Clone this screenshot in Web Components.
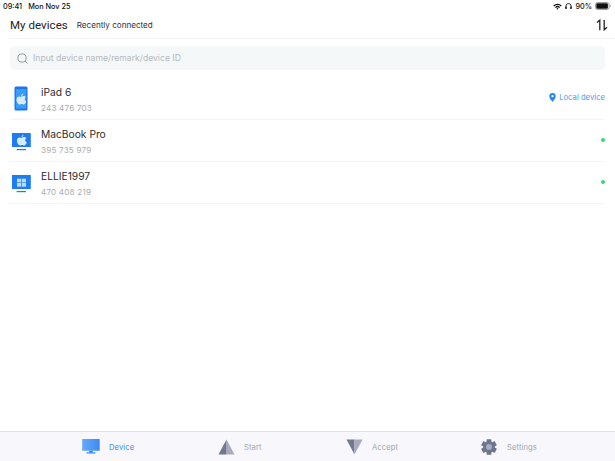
<!DOCTYPE html>
<html><head><meta charset="utf-8">
<style>
html,body{margin:0;padding:0;height:100%;background:#fff}
body{font-family:Inter,"Liberation Sans",sans-serif;overflow:hidden}
</style></head><body>
<app-shell></app-shell>
<script>
const APPLE='<path d="M11.900 7.800c1.100 0 1.700-.7 2.700-.7.900 0 1.700.5 2.200 1.200-1.800 1.100-1.500 3.600.4 4.400-.5 1.300-1.500 3-2.600 3-.8 0-1.100-.5-2-.5s-1.300.5-2.100.5c-1.500 0-3.100-2.600-3.100-4.700 0-2 1.300-3.200 2.700-3.200.8 0 1.300.5 1.800.5z" fill="#d6ebff"/><path d="M12 7.300c0-1.200.8-2.100 1.900-2.300.1 1.200-.7 2.200-1.900 2.300z" fill="#d6ebff"/>';
class StatusBar extends HTMLElement{constructor(){super();this.attachShadow({mode:'open'}).innerHTML=`<style>
:host{display:flex;justify-content:space-between;align-items:center;height:11px;padding:0 4px 0 3px;font:500 7.300px/11px Inter,"Liberation Sans",sans-serif;color:#111}
.l{display:flex;gap:6px;padding-top:1px}.r{display:flex;align-items:center;gap:3px;padding-top:1px}svg{display:block}
</style><div class="l"><span>09:41</span><span>Mon Nov 25</span></div>
<div class="r"><svg width="9" height="7" viewBox="0 0 10 7"><path d="M.3 2.300a6.600 6.600 0 0 1 9.400 0L8.600 3.400a5 5 0 0 0-7.200 0zM2.200 4.200a3.900 3.900 0 0 1 5.600 0L6.800 5.200a2.500 2.500 0 0 0-3.600 0zM5 7 3.900 5.800a1.600 1.600 0 0 1 2.200 0z" fill="#111"/></svg>
<svg width="7" height="8" viewBox="0 0 8 8"><path d="M1 7V4.200a3 3 0 0 1 6 0V7" fill="none" stroke="#111" stroke-width="1"/><rect x=".4" y="4.600" width="1.600" height="2.800" rx=".5" fill="#111"/><rect x="6" y="4.600" width="1.600" height="2.800" rx=".5" fill="#111"/></svg>
<span>90%</span>
<svg width="16" height="8" viewBox="0 0 16 8"><rect x=".5" y=".5" width="13.500" height="7" rx="2" fill="none" stroke="#888" stroke-width=".8"/><rect x="1.300" y="1.300" width="11.600" height="5.400" rx="1.200" fill="#111"/><path d="M14.800 2.800c.7.200 1 .6 1 1.200s-.3 1-1 1.200z" fill="#888"/></svg></div>`}}
class TopBar extends HTMLElement{constructor(){super();this.attachShadow({mode:'open'}).innerHTML=`<style>
:host{display:flex;align-items:center;height:27px;margin:0 0 0 10px;padding-right:7px;border-bottom:1px solid #f1f2f3;color:#222}
.t{font-family:Roboto,sans-serif;font-size:11.500px;letter-spacing:.05px;margin-right:9px}.s{font-size:8.100px;flex:1;color:#333;padding-top:1px}svg{display:block}
</style><span class="t">My devices</span><span class="s">Recently connected</span>
<svg width="12" height="12" viewBox="0 0 12 12"><path d="M3.800 11.200V1.200L1 3.600" fill="none" stroke="#222" stroke-width="1.300"/><path d="M8.200 1V10.800L11 8.200" fill="none" stroke="#222" stroke-width="1.300"/></svg>`}}
class SearchBox extends HTMLElement{constructor(){super();this.attachShadow({mode:'open'}).innerHTML=`<style>
:host{display:flex;align-items:center;gap:5px;height:24px;margin:7px 10px 0;padding-left:7px;border-radius:5px;background:#f5f8f9;color:#b5b9be;font-size:8.650px}
svg{display:block}</style>
<svg width="11" height="11" viewBox="0 0 11 11"><circle cx="5" cy="5" r="4.100" fill="none" stroke="#8b8f94" stroke-width=".9"/><path d="M8 8l2.400 2.400" stroke="#8b8f94" stroke-width=".9"/></svg><span><slot></slot></span>`}}
class DeviceRow extends HTMLElement{constructor(){super();const k=this.getAttribute('kind');
const ic=k==='pad'?`<svg width="22" height="26" viewBox="0 0 22 26"><rect x="4.500" y=".5" width="13" height="24" rx="1.500" fill="#1a76e8"/><rect x="5.800" y="3" width="10.400" height="19.500" fill="#3b9cf7"/><g transform="translate(-.9 2.800)">${APPLE}</g></svg>`
:`<svg width="22" height="20" viewBox="0 0 22 20"><path d="M2 2H20.800V16H2z" fill="#1d7cf0"/><rect x="6.700" y="18" width="9.300" height="1.200" fill="#1d7cf0"/>${k==='mac'?`<g transform="translate(-.4 -1.200)">${APPLE}</g>`:`<g fill="#b9dafc"><rect x="7" y="5.700" width="4.200" height="3.700"/><rect x="11.800" y="5.700" width="4.200" height="3.700"/><rect x="7" y="10" width="4.200" height="3.700"/><rect x="11.800" y="10" width="4.200" height="3.700"/></g>`}</svg>`;
this.attachShadow({mode:'open'}).innerHTML=`<style>
:host{display:flex;align-items:center;height:41px;margin:0 10px;border-bottom:1px solid #f3f4f5}
.i{width:22px;height:26px;margin-right:9px;display:flex;align-items:center}
.m{flex:1;display:flex;flex-direction:column;gap:4px;padding-top:2px}
.n{font-size:10.250px;line-height:13px;color:#2c2c2e}.d{font-size:8.100px;line-height:10px;color:#a9acb0;letter-spacing:.2px}
.e{display:flex;align-items:center;padding-bottom:2px}svg{display:block}
</style><div class="i">${ic}</div><div class="m"><div class="n">${this.getAttribute('name')}</div><div class="d">${this.getAttribute('num')}</div></div><div class="e"><slot></slot></div>`}}
class LocalTag extends HTMLElement{constructor(){super();this.attachShadow({mode:'open'}).innerHTML=`<style>
:host{display:flex;align-items:center;gap:3.500px;color:#4a9bf0;font-size:7.700px;white-space:nowrap}svg{display:block}
</style><svg width="7" height="9" viewBox="0 0 7 9"><path d="M3.500 9C1.500 6.500.3 5.200.3 3.300a3.200 3.200 0 0 1 6.400 0C6.700 5.200 5.500 6.500 3.500 9z" fill="#2b8ae8"/><circle cx="3.500" cy="3.200" r="1.100" fill="#fff"/></svg><span>Local device</span>`}}
class OnlineDot extends HTMLElement{constructor(){super();this.attachShadow({mode:'open'}).innerHTML=`<style>:host{display:block;width:4px;height:4px;border-radius:50%;background:#34d678}</style>`}}
class TabItem extends HTMLElement{constructor(){super();const k=this.getAttribute('kind'),a=this.hasAttribute('active');
const teeth=[0,60,120,180,240,300].map(r=>`<rect x="5.600" y=".2" width="4.800" height="3.500" rx=".6" fill="#6f7590" transform="rotate(${r} 8 8)"/>`).join('');
const icons={device:`<svg width="18" height="17" viewBox="0 0 18 17"><defs><linearGradient id="g1" x1="0" y1="0" x2="1" y2="0"><stop offset="0" stop-color="#68a9f7"/><stop offset="1" stop-color="#3b8cf2"/></linearGradient></defs><rect x=".2" y="1" width="17.500" height="11.800" rx=".5" fill="url(#g1)"/><path d="M7.200 12.800h3.600v1.700H7.200z" fill="#2d86ee"/><rect x="4.500" y="14.300" width="9" height="1.200" fill="#2d86ee"/></svg>`,
start:`<svg width="17" height="16" viewBox="0 0 17 16"><path d="M8.500 .5 16.500 15.500H8.500z" fill="#a7abbd"/><path d="M8.500 .5 .5 15.500H8.500z" fill="#72788f"/></svg>`,
accept:`<svg width="17" height="16" viewBox="0 0 17 16"><path d="M.5 .5H8.500V15.500z" fill="#72788f"/><path d="M16.500 .5H8.500V15.500z" fill="#a7abbd"/></svg>`,
settings:`<svg width="16" height="16" viewBox="0 0 16 16">${teeth}<circle cx="8" cy="8" r="5.800" fill="#6f7590"/><circle cx="8" cy="8" r="3" fill="#a9adc0"/></svg>`};
this.attachShadow({mode:'open'}).innerHTML=`<style>
:host{display:flex;align-items:center;gap:${this.getAttribute('gap')}px;flex:0 0 auto;width:${this.getAttribute('w')}px;font-size:7.600px;letter-spacing:.1px;color:${a?'#3f8fe8':'#a4a6ab'}}svg{display:block}span{padding-top:1px}
</style>${icons[k]}<span>${this.getAttribute('label')}</span>`}}
class TabBar extends HTMLElement{constructor(){super();this.attachShadow({mode:'open'}).innerHTML=`<style>
:host{display:flex;align-items:center;height:29px;margin-top:auto;padding-left:82px;background:#f7f7fc;border-top:1px solid #e2e3e8}
</style><slot></slot>`}}
class AppShell extends HTMLElement{constructor(){super();this.attachShadow({mode:'open'}).innerHTML=`<style>
:host{display:flex;flex-direction:column;height:461px;width:615px;background:#fff;font-family:Inter,"Liberation Sans",sans-serif}
.list{margin-top:8px}
</style>
<status-bar></status-bar><top-bar></top-bar><search-box>Input device name/remark/device ID</search-box>
<div class="list">
<device-row kind="pad" name="iPad 6" num="243 476 703"><local-tag></local-tag></device-row>
<device-row kind="mac" name="MacBook Pro" num="395 735 979"><online-dot></online-dot></device-row>
<device-row kind="win" name="ELLIE1997" num="470 408 219"><online-dot></online-dot></device-row>
</div>
<tab-bar>
<tab-item kind="device" label="Device" active gap="9" w="136"></tab-item>
<tab-item kind="start" label="Start" gap="9" w="128"></tab-item>
<tab-item kind="accept" label="Accept" gap="9" w="135"></tab-item>
<tab-item kind="settings" label="Settings" gap="10" w="100"></tab-item>
</tab-bar>`}}
for(const [n,c] of Object.entries({'status-bar':StatusBar,'top-bar':TopBar,'search-box':SearchBox,'device-row':DeviceRow,'local-tag':LocalTag,'online-dot':OnlineDot,'tab-item':TabItem,'tab-bar':TabBar,'app-shell':AppShell}))customElements.define(n,c);
</script>
</body></html>
